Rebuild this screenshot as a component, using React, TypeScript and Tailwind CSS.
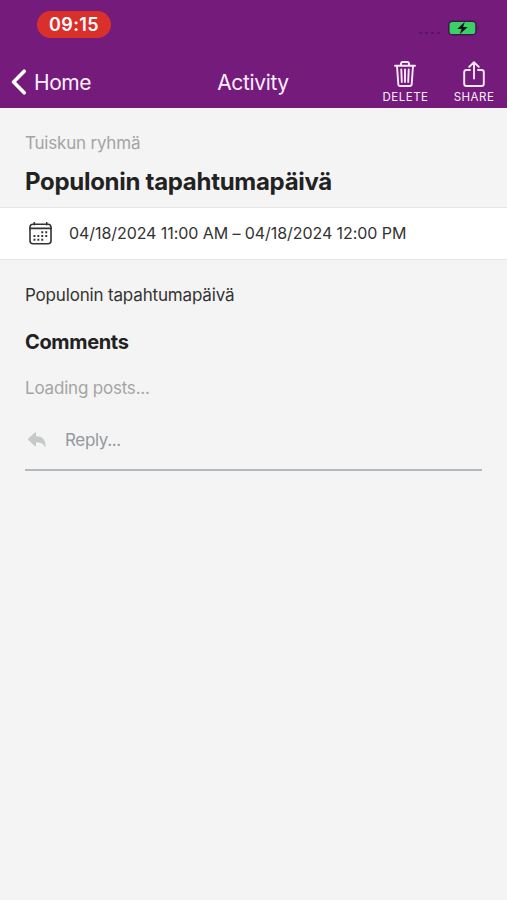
import React from "react";

const ChevronIcon: React.FC = () => (
  <svg width="16" height="26" viewBox="0 0 16 26" fill="none">
    <path
      d="M13.2 2.2 2.6 13 13.2 23.8"
      stroke="#fff"
      strokeWidth="3.6"
      strokeLinecap="round"
      strokeLinejoin="round"
    />
  </svg>
);

const BatteryIcon: React.FC = () => (
  <svg width="32" height="16" viewBox="0 0 32 16">
    <rect x="0.8" y="1.2" width="27.2" height="13.6" rx="3.6" fill="#3bd066" stroke="#421350" strokeWidth="1.5" />
    <path d="M29.6 6v4c1.3-.5 1.3-3.5 0-4z" fill="#421350" />
    <path d="M16.8 1.8 9.3 8.9h4.3l-1.9 5.3 8.1-7.3h-4.6z" fill="#17101c" />
  </svg>
);

const TrashIcon: React.FC = () => (
  <svg
    width="22"
    height="26"
    viewBox="0 0 22 26"
    fill="none"
    stroke="#fbeafd"
    strokeWidth="1.9"
    strokeLinecap="round"
    strokeLinejoin="round"
  >
    <path d="M1 4.8h20M7 4.6V2.7C7 1.6 7.6 1 8.7 1h4.6c1.1 0 1.7.6 1.7 1.7v1.9" />
    <path d="m3 5 1.3 18.2c.1 1.2.8 1.8 1.9 1.8h9.6c1.1 0 1.800-.6 1.9-1.8L19 5" />
    <path d="M7.3 8.5 7.8 21M11 8.5V21M14.7 8.5 14.2 21" />
  </svg>
);

const ShareIcon: React.FC = () => (
  <svg
    width="22"
    height="26"
    viewBox="0 0 22 26"
    fill="none"
    stroke="#fbeafd"
    strokeWidth="1.9"
    strokeLinecap="round"
    strokeLinejoin="round"
  >
    <path d="M7 9H3.5C2 9 1.200 9.800 1.200 11.300v11.400c0 1.500.8 2.300 2.300 2.300h15c1.500 0 2.300-.8 2.300-2.300V11.300c0-1.500-.8-2.300-2.300-2.300H15" />
    <path d="M11 17.500V1.200M6.200 5.900 11 1.200l4.800 4.700" />
  </svg>
);

const CalendarIcon: React.FC = () => (
  <svg width="23" height="23" viewBox="0 0 23 23" fill="none">
    <rect x="1" y="2.2" width="21" height="19.6" rx="3" stroke="#333" strokeWidth="1.6" />
    <path d="M1 6.4h21M5.300.7v2M17.700.7v2" stroke="#333" strokeWidth="1.6" strokeLinecap="round" />
    <path
      d="M12.3 10.2h1.9M16.3 10.2h1.9M4.5 14h1.9M8.4 14h1.9M12.3 14h1.9M16.3 14h1.9M4.5 17.8h1.9M8.4 17.8h1.9M12.3 17.8h1.9"
      stroke="#333"
      strokeWidth="1.9"
    />
  </svg>
);

const ReplyIcon: React.FC = () => (
  <svg width="18" height="16" viewBox="0 0 18 16">
    <path
      d="M.3 6.5 7 .5c.5-.4 1-.2 1 .4v3.4c5.8.1 9.5 2.8 9.7 10.2 0 .8-.5.9-.8.3C15.300 11.500 12.500 10.300 8 10.200v3.600c0 .6-.5.8-1 .4L.3 7.900c-.4-.4-.4-1 0-1.400z"
      fill="#c6c8c9"
    />
  </svg>
);

const App: React.FC = () => {
  return (
    <div className="min-h-[900px] w-full bg-[#f4f4f4] font-['Inter','Liberation_Sans',sans-serif] text-[#222]">
      <header className="h-[108px] bg-[#751b7c] text-[#fdeffe]">
        {/* Status bar */}
        <div className="flex h-12 items-start justify-between pt-[11px] pr-[27px] pl-[37px]">
          <div className="flex h-[27px] w-[74px] items-center justify-center rounded-full bg-[#d9302c] text-[18px] font-semibold text-white">
            <span className="tracking-[0.4px]">09:15</span>
          </div>
          <div className="flex items-center gap-2 pt-[9px]">
            <div className="flex gap-[3px] pt-[10px]">
              <span className="h-[2px] w-[3px] rounded-full bg-[#5a1265]" />
              <span className="h-[2px] w-[3px] rounded-full bg-[#5a1265]" />
              <span className="h-[2px] w-[3px] rounded-full bg-[#5a1265]" />
              <span className="h-[2px] w-[3px] rounded-full bg-[#5a1265]" />
            </div>
            <BatteryIcon />
          </div>
        </div>

        {/* Navigation */}
        <nav className="grid h-[60px] grid-cols-3 pr-[12px] pl-[11px]">
          <button className="flex h-[67px] items-center gap-[7px] text-[21px]">
            <ChevronIcon />
            <span className="pt-[2px] tracking-[-0.45px]">Home</span>
          </button>
          <h1 className="flex h-[67px] items-center justify-center pt-[2px] text-[21px] tracking-[-0.35px]">Activity</h1>
          <div className="flex justify-end gap-[24px] pt-[13px] text-[11.5px] leading-[14px]">
            <button className="flex w-[47px] flex-col items-center gap-[3px]">
              <TrashIcon />
              <span className="tracking-[0.5px]">DELETE</span>
            </button>
            <button className="flex w-[42px] flex-col items-center gap-[3px]">
              <ShareIcon />
              <span className="tracking-[0.5px]">SHARE</span>
            </button>
          </div>
        </nav>
      </header>

      <main>
        <div className="h-[99px] px-[25px] pt-[23px]">
          <p className="text-[17px] leading-6 tracking-[-0.2px] text-[#a4a4a4]">Tuiskun ryhmä</p>
          <h2 className="mt-[11px] text-[24px] leading-8 font-bold tracking-[-0.29px]">Populonin tapahtumapäivä</h2>
        </div>

        <div className="flex h-[53px] items-center gap-[17px] border-y border-[#e6e6e6] bg-white pl-[29px] text-[16px] text-[#333]">
          <CalendarIcon />
          <span className="pb-[2px] tracking-[-0.07px] whitespace-nowrap">04/18/2024 11:00 AM – 04/18/2024 12:00 PM</span>
        </div>

        <div className="px-[25px] pt-[23px]">
          <p className="text-[17px] leading-6 tracking-[-0.17px] text-[#333]">Populonin tapahtumapäivä</p>
          <h3 className="mt-[21px] text-[20px] leading-7 font-bold tracking-[-0.35px]">Comments</h3>
          <p className="mt-5 text-[17px] leading-6 tracking-[-0.2px] text-[#a4a4a4]">Loading posts...</p>
          <div className="mt-[18px] flex h-[53px] gap-[19px] border-b-2 border-[#b3babf] pt-[10px] pl-[3px]">
            <div className="pt-[4px]">
              <ReplyIcon />
            </div>
            <span className="text-[17px] leading-6 tracking-[-0.35px] text-[#92999f]">Reply...</span>
          </div>
        </div>
      </main>
    </div>
  );
};

export default App;
